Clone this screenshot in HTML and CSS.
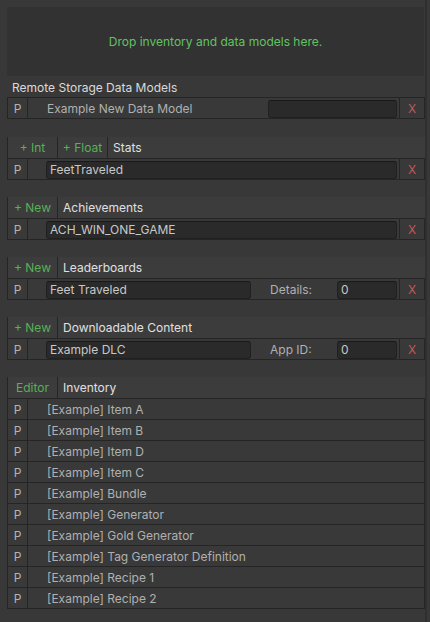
FILE: index.html
```html
<!DOCTYPE html>
<html>
<head>
<meta charset="utf-8">
<link rel="stylesheet" href="styles.css">
</head>
<body>
<div class="page">
  <main class="content">
    <div class="dropzone">Drop inventory and data models here.</div>

    <div class="title">Remote Storage Data Models</div>
    <div class="row">
      <span class="p">P</span>
      <span class="name">Example New Data Model</span>
      <span class="field model"></span>
      <span class="x">X</span>
    </div>

    <section class="group">
      <div class="head"><span class="btn">+ Int</span><span class="btn">+ Float</span><span class="label">Stats</span></div>
      <div class="row">
        <span class="p">P</span><span class="blank"></span>
        <span class="field grow">FeetTraveled</span>
        <span class="x">X</span>
      </div>
    </section>

    <section class="group">
      <div class="head"><span class="btn">+ New</span><span class="label">Achievements</span></div>
      <div class="row">
        <span class="p">P</span><span class="blank"></span>
        <span class="field grow">ACH_WIN_ONE_GAME</span>
        <span class="x">X</span>
      </div>
    </section>

    <section class="group">
      <div class="head"><span class="btn">+ New</span><span class="label">Leaderboards</span></div>
      <div class="row">
        <span class="p">P</span><span class="blank"></span>
        <span class="field wide">Feet Traveled</span>
        <span class="sub">Details:</span>
        <span class="field num">0</span>
        <span class="x">X</span>
      </div>
    </section>

    <section class="group">
      <div class="head"><span class="btn">+ New</span><span class="label">Downloadable Content</span></div>
      <div class="row">
        <span class="p">P</span><span class="blank"></span>
        <span class="field wide">Example DLC</span>
        <span class="sub">App ID:</span>
        <span class="field num">0</span>
        <span class="x">X</span>
      </div>
    </section>

    <section class="group">
      <div class="head"><span class="btn">Editor</span><span class="label">Inventory</span></div>
      <div class="list">
        <div class="row"><span class="p">P</span><span class="name">[Example] Item A</span></div>
        <div class="row"><span class="p">P</span><span class="name">[Example] Item B</span></div>
        <div class="row"><span class="p">P</span><span class="name">[Example] Item D</span></div>
        <div class="row"><span class="p">P</span><span class="name">[Example] Item C</span></div>
        <div class="row"><span class="p">P</span><span class="name">[Example] Bundle</span></div>
        <div class="row"><span class="p">P</span><span class="name">[Example] Generator</span></div>
        <div class="row"><span class="p">P</span><span class="name">[Example] Gold Generator</span></div>
        <div class="row"><span class="p">P</span><span class="name">[Example] Tag Generator Definition</span></div>
        <div class="row"><span class="p">P</span><span class="name">[Example] Recipe 1</span></div>
        <div class="row"><span class="p">P</span><span class="name">[Example] Recipe 2</span></div>
      </div>
    </section>
  </main>
  <div class="edge"></div>
</div>
</body>
</html>
```

FILE: styles.css
```css
* { box-sizing: border-box; }
html, body { margin: 0; padding: 0; }
body {
  background: #383838;
  font-family: Inter, "Noto Sans", sans-serif;
  font-size: 12px;
  color: #c4c4c4;
  width: 430px;
  height: 622px;
  overflow: hidden;
}
.page {
  display: flex;
  height: 622px;
}
.content {
  margin-left: 7px;
  width: 418px;
  padding-top: 7px;
}
.edge {
  width: 2px;
  background: #2f2f2f;
}
.dropzone {
  height: 69px;
  width: 417px;
  background: #323232;
  color: #62c262;
  display: flex;
  align-items: center;
  justify-content: center;
}
.title {
  height: 21px;
  padding-top: 4px;
  line-height: 16px;
  padding-left: 5px;
  color: #dadada;
}
.row {
  display: flex;
  align-items: center;
  height: 22px;
  border: 1px solid #252525;
  background: #393939;
}
.p {
  width: 20px;
  align-self: stretch;
  border-right: 1px solid #252525;
  display: flex;
  align-items: center;
  justify-content: center;
  color: #b4b4b4;
}
.blank { width: 18px; }
.name {
  flex: 1;
  padding-left: 19px;
  color: #b0b0b0;
  white-space: nowrap;
  overflow: hidden;
}
.field {
  height: 18px;
  margin-top: 1px;
  border-radius: 3px;
  background: #2a2a2a;
  border: 1px solid #202020;
  border-top-color: #191919;
  padding-left: 3px;
  line-height: 16px;
  color: #c8c8c8;
  white-space: nowrap;
}
.field.model { width: 129px; margin-right: 2px; }
.field.grow { flex: 1; margin-right: 2px; }
.field.wide { width: 205px; }
.field.num { width: 60px; margin-right: 2px; }
.sub {
  width: 86px;
  padding-left: 19px;
  color: #b0b0b0;
}
.x {
  width: 25px;
  align-self: stretch;
  border-left: 1px solid #252525;
  display: flex;
  align-items: center;
  justify-content: center;
  color: #c25757;
}
.group { margin-top: 18px; }
.group + .group { margin-top: 17px; }
.head {
  display: flex;
  height: 21px;
  background: #3c3c3c;
  border-left: 1px solid #252525;
}
.btn {
  width: 50px;
  border-right: 1px solid #252525;
  display: flex;
  align-items: center;
  justify-content: center;
  color: #56b156;
}
.label {
  padding-left: 5px;
  display: flex;
  align-items: center;
  color: #e0e0e0;
}
.list .row + .row { border-top: none; height: 21px; }
```
